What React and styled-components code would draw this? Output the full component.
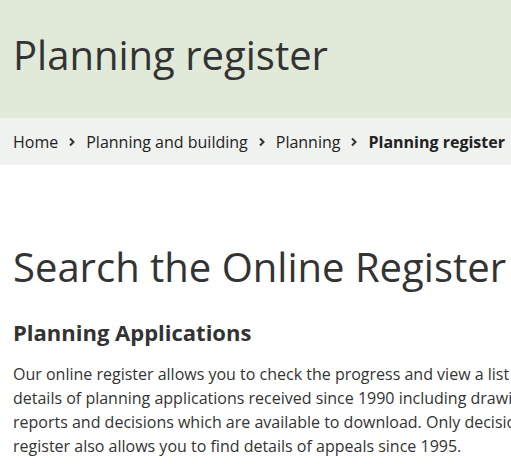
import React from 'react';
import styled, { createGlobalStyle } from 'styled-components';

const GlobalStyle = createGlobalStyle`
  html, body {
    margin: 0;
    padding: 0;
    overflow: hidden;
  }
  body {
    font-family: "Open Sans", "DejaVu Sans", sans-serif;
    color: #333333;
    background: #ffffff;
  }
`;

const Page = styled.div`
  width: 720px;
`;

const Banner = styled.header`
  background: #e1e9d9;
  height: 118px;
  box-sizing: border-box;
  padding: 31px 13px 0;
`;

const Title = styled.h1`
  margin: 0;
  font-size: 40px;
  font-weight: 400;
  line-height: 48px;
  color: #333333;
`;

const Crumbs = styled.nav`
  background: #f0f2ef;
  height: 47px;
  padding: 0 13px;
  display: flex;
  align-items: center;
  gap: 10px;
  font-size: 16px;
`;

const Crumb = styled.span`
  color: #222222;
  font-weight: ${({ current }) => (current ? 700 : 400)};
  white-space: nowrap;
`;

const Sep = styled.svg`
  width: 8px;
  height: 10px;
  flex: none;
`;

const Main = styled.main`
  padding: 78px 13px 0;
`;

const Heading = styled.h2`
  margin: 0;
  font-size: 40px;
  font-weight: 400;
  line-height: 48px;
  white-space: nowrap;
`;

const Sub = styled.h3`
  margin: 27px 0 0;
  font-size: 22px;
  font-weight: 700;
  line-height: 29px;
`;

const Para = styled.p`
  margin: 15px 0 0;
  font-size: 16px;
  line-height: 24px;
  white-space: nowrap;
`;

const Chevron = () => (
  <Sep viewBox="0 0 8 10">
    <path d="M2 1.5 L5.5 5 L2 8.5" fill="none" stroke="#333" strokeWidth="2" />
  </Sep>
);

const trail = ['Home', 'Planning and building', 'Planning'];

const lines = [
  'Our online register allows you to check the progress and view a list of',
  'details of planning applications received since 1990 including drawings,',
  'reports and decisions which are available to download. Only decisions',
  'register also allows you to find details of appeals since 1995.',
];

export default function App() {
  return (
    <Page>
      <GlobalStyle />
      <Banner>
        <Title>Planning register</Title>
      </Banner>
      <Crumbs>
        {trail.map((t) => (
          <React.Fragment key={t}>
            <Crumb>{t}</Crumb>
            <Chevron />
          </React.Fragment>
        ))}
        <Crumb current>Planning register</Crumb>
      </Crumbs>
      <Main>
        <Heading>Search the Online Register</Heading>
        <Sub>Planning Applications</Sub>
        <Para>
          {lines.map((l, i) => (
            <React.Fragment key={i}>
              {l}
              {i < lines.length - 1 && <br />}
            </React.Fragment>
          ))}
        </Para>
      </Main>
    </Page>
  );
}
